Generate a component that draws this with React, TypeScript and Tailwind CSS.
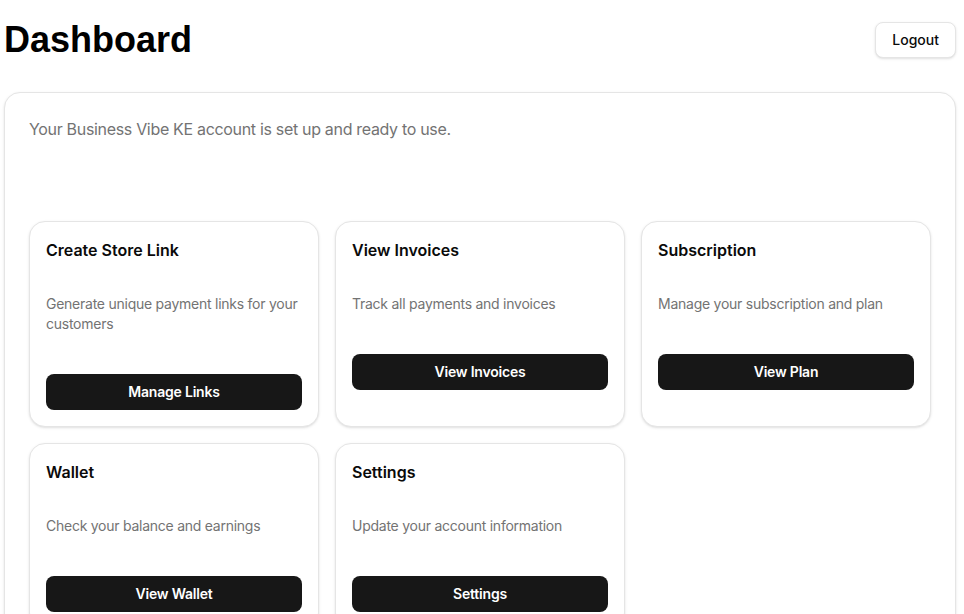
import React from "react";

type Item = { title: string; desc: string; action: string };

const items: Item[] = [
  { title: "Create Store Link", desc: "Generate unique payment links for your customers", action: "Manage Links" },
  { title: "View Invoices", desc: "Track all payments and invoices", action: "View Invoices" },
  { title: "Subscription", desc: "Manage your subscription and plan", action: "View Plan" },
  { title: "Wallet", desc: "Check your balance and earnings", action: "View Wallet" },
  { title: "Settings", desc: "Update your account information", action: "Settings" },
];

function ActionCard({ item }: { item: Item }) {
  return (
    <div className="flex flex-col rounded-2xl border border-[#e5e5e5] bg-white p-4 shadow-sm">
      <h3 className="text-base leading-6 font-semibold text-[#0a0a0a]">{item.title}</h3>
      <p className="mt-8 text-sm leading-5 tracking-[-0.018em] text-[#737373]">{item.desc}</p>
      <button className="mt-10 h-9 w-full rounded-lg bg-[#171717] text-sm font-semibold tracking-[-0.015em] text-white">
        {item.action}
      </button>
    </div>
  );
}

export default function App() {
  return (
    <div className="min-h-screen bg-white pt-5 pl-1 pr-2 font-['Inter',sans-serif] text-[#0a0a0a]">
      <div className="flex items-center justify-between">
        <h1 className="font-['Liberation_Sans',Arial,sans-serif] text-4xl leading-10 font-bold text-black">
          Dashboard
        </h1>
        <button className="h-9 rounded-lg border border-[#e5e5e5] bg-white px-4 text-sm font-medium shadow-sm">
          Logout
        </button>
      </div>

      <div className="mt-8 rounded-2xl border border-[#e5e5e5] bg-white py-6 pl-6 pr-6 shadow-sm">
        <p className="text-base leading-6 tracking-[-0.02em] text-[#737373]">
          Your Business Vibe KE account is set up and ready to use.
        </p>
        <div className="mt-20 grid grid-cols-3 gap-4">
          {items.map((item) => (
            <ActionCard key={item.title} item={item} />
          ))}
        </div>
      </div>
    </div>
  );
}
